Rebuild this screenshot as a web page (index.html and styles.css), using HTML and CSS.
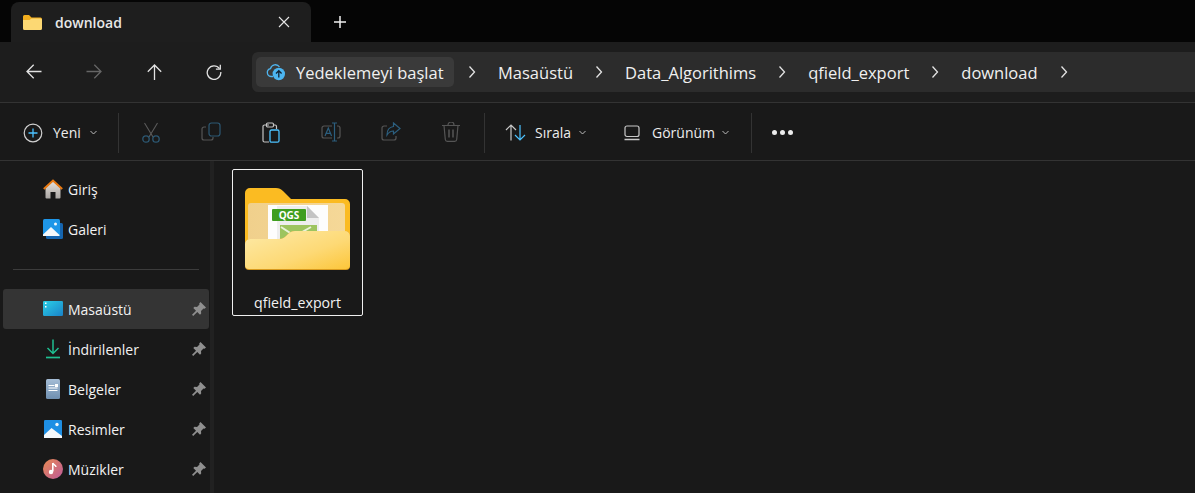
FILE: index.html
```html
<!DOCTYPE html>
<html lang="tr">
<head>
<meta charset="utf-8">
<title>download</title>
<link rel="stylesheet" href="styles.css">
</head>
<body>
<div class="window">
  <div class="tabstrip">
    <div class="tab">
      <svg class="tab-folder" width="19" height="15" viewBox="0 0 19 15"><path d="M0 1.500A1.500 1.500 0 0 1 1.500 0H6l2.500 2.500H17.500A1.500 1.500 0 0 1 19 4v2H0z" fill="#f2ae1e"/><path d="M0 5h6.500L8.500 3.500H17.500A1.500 1.500 0 0 1 19 5v8.500a1.500 1.500 0 0 1-1.500 1.500h-16A1.500 1.500 0 0 1 0 13.500z" fill="#fcd873"/></svg>
      <span class="tab-title">download</span>
      <svg class="tab-close" width="12" height="12" viewBox="0 0 12 12"><path d="M1 1l10 10M11 1L1 11" stroke="#e6e6e6" stroke-width="1.100" fill="none"/></svg>
    </div>
    <svg class="tab-add" width="12" height="12" viewBox="0 0 12 12"><path d="M6 0v12M0 6h12" stroke="#f0f0f0" stroke-width="1.500"/></svg>
  </div>

  <div class="navbar">
    <div class="nav-buttons">
      <span class="nav-btn"><svg width="16" height="15" viewBox="0 0 16 15"><path d="M15.500 7.500H1.200M7.700 .8L1 7.500l6.700 6.700" stroke="#e2e2e2" stroke-width="1.300" fill="none"/></svg></span>
      <span class="nav-btn"><svg width="16" height="15" viewBox="0 0 16 15"><path d="M.5 7.500h14.300M8.300 .8L15 7.500l-6.700 6.700" stroke="#666" stroke-width="1.300" fill="none"/></svg></span>
      <span class="nav-btn"><svg width="15" height="16" viewBox="0 0 15 16"><path d="M7.500 16V1.200M.8 7.700L7.500 1l6.700 6.700" stroke="#e2e2e2" stroke-width="1.300" fill="none"/></svg></span>
      <span class="nav-btn"><svg width="16" height="16" viewBox="0 0 16 16"><path d="M13.500 4.600A6.800 6.800 0 1 0 14.800 8" stroke="#e2e2e2" stroke-width="1.300" fill="none"/><path d="M14.300 0.800v4.400H9.900" stroke="#e2e2e2" stroke-width="1.300" fill="none"/></svg></span>
    </div>
    <div class="address">
      <div class="backup">
        <svg width="20" height="18" viewBox="0 0 20 18"><path d="M7 13.500H5a4 4 0 0 1-.5-7.900A5 5 0 0 1 13.500 4" stroke="#4fb4ee" stroke-width="1.300" fill="none"/><circle cx="12.800" cy="11" r="6.200" fill="#4cb5f0"/><path d="M12.800 14.500V8M10 10.500l2.800-2.800 2.800 2.800" stroke="#123" stroke-width="1.300" fill="none"/></svg>
        <span>Yedeklemeyi başlat</span>
      </div>
      <svg class="crumb-sep" width="8" height="14" viewBox="0 0 8 14"><path d="M1.500 1.500L6.500 7l-5 5.500" stroke="#e4e4e4" stroke-width="1.300" fill="none"/></svg>
      <span class="crumb">Masaüstü</span>
      <svg class="crumb-sep" width="8" height="14" viewBox="0 0 8 14"><path d="M1.500 1.500L6.500 7l-5 5.500" stroke="#e4e4e4" stroke-width="1.300" fill="none"/></svg>
      <span class="crumb">Data_Algorithims</span>
      <svg class="crumb-sep" width="8" height="14" viewBox="0 0 8 14"><path d="M1.500 1.500L6.500 7l-5 5.500" stroke="#e4e4e4" stroke-width="1.300" fill="none"/></svg>
      <span class="crumb">qfield_export</span>
      <svg class="crumb-sep" width="8" height="14" viewBox="0 0 8 14"><path d="M1.500 1.500L6.500 7l-5 5.500" stroke="#e4e4e4" stroke-width="1.300" fill="none"/></svg>
      <span class="crumb">download</span>
      <svg class="crumb-sep" width="8" height="14" viewBox="0 0 8 14"><path d="M1.500 1.500L6.500 7l-5 5.500" stroke="#e4e4e4" stroke-width="1.300" fill="none"/></svg>
    </div>
  </div>

  <div class="toolbar">
    <div class="tool tool-new">
      <svg width="20" height="20" viewBox="0 0 20 20"><circle cx="10" cy="10" r="8.800" stroke="#d0d0d0" stroke-width="1.200" fill="none"/><path d="M10 5.500v9M5.500 10h9" stroke="#4cc2ff" stroke-width="1.300"/></svg>
      <span>Yeni</span>
      <svg class="chev" width="7" height="5" viewBox="0 0 7 5"><path d="M.5 1l3 3 3-3" stroke="#bbb" fill="none"/></svg>
    </div>
    <i class="tool-sep"></i>
    <div class="icon-group">
      <span class="icon-btn"><svg width="20" height="21" viewBox="0 0 20 21"><path d="M3.500 1l8.500 14M16.500 1L8 15" stroke="#5a5a5a" stroke-width="1.100" fill="none"/><circle cx="5" cy="17" r="3.200" stroke="#2c5873" stroke-width="1.300" fill="none"/><circle cx="15" cy="17" r="3.200" stroke="#2c5873" stroke-width="1.300" fill="none"/></svg></span>
      <span class="icon-btn"><svg width="20" height="19" viewBox="0 0 20 19"><path d="M5 5H3a2 2 0 0 0-2 2v9a2 2 0 0 0 2 2h7a2 2 0 0 0 2-2v-1" stroke="#555" stroke-width="1.200" fill="none"/><rect x="8" y="1" width="11" height="13" rx="2.500" stroke="#2c5873" stroke-width="1.200" fill="none"/></svg></span>
      <span class="icon-btn"><svg width="18" height="21" viewBox="0 0 18 21"><path d="M7 3H2.500A1.500 1.500 0 0 0 1 4.500v14A1.500 1.500 0 0 0 2.500 20H7M14.500 7V4.500A1.500 1.500 0 0 0 13 3h-1" stroke="#c4c4c4" stroke-width="1.200" fill="none"/><rect x="4.500" y="1" width="7" height="4" rx="1.200" stroke="#c4c4c4" stroke-width="1.200" fill="none"/><rect x="8" y="8" width="9" height="12.200" rx="1.500" stroke="#4cc2ff" stroke-width="1.300" fill="none"/></svg></span>
      <span class="icon-btn"><svg width="20" height="20" viewBox="0 0 20 20"><path d="M11 4H3a2 2 0 0 0-2 2v8a2 2 0 0 0 2 2h8M16 4h1a2 2 0 0 1 2 2v8a2 2 0 0 1-2 2h-1" stroke="#555" stroke-width="1.200" fill="none"/><path d="M11 1h5M13.500 1v18M11 19h5" stroke="#2c5f7f" stroke-width="1.200" fill="none"/><path d="M4 14l3.300-8 3.300 8M5.200 11.300h4.200" stroke="#2c5f7f" stroke-width="1.200" fill="none"/></svg></span>
      <span class="icon-btn"><svg width="20" height="19" viewBox="0 0 20 19"><path d="M6 4H3a2 2 0 0 0-2 2v10a2 2 0 0 0 2 2h10a2 2 0 0 0 2-2v-2" stroke="#555" stroke-width="1.200" fill="none"/><path d="M12.500 1l6.500 5.500-6.500 5.500V9C9 9 7.500 10.500 6 13c0-5 2.500-8 6.500-8.500z" stroke="#2c5f7f" stroke-width="1.200" fill="none"/></svg></span>
      <span class="icon-btn"><svg width="18" height="20" viewBox="0 0 18 20"><path d="M0 3.500h18M6 3.500V3a3 3 0 0 1 6 0v.5M2 3.500l1.300 14a2 2 0 0 0 2 1.800h7.400a2 2 0 0 0 2-1.800L16 3.500" stroke="#555" stroke-width="1.200" fill="none"/><path d="M7 7.500v8M11 7.500v8" stroke="#555" stroke-width="1.500"/></svg></span>
    </div>
    <i class="tool-sep"></i>
    <div class="tool tool-sort">
      <svg width="21" height="17" viewBox="0 0 21 17"><path d="M6 16.500V1M1 6l5-5 5 5" stroke="#c8c8c8" stroke-width="1.200" fill="none"/><path d="M15 1v15M10 11l5 5 5-5" stroke="#4cc2ff" stroke-width="1.200" fill="none"/></svg>
      <span>Sırala</span>
      <svg class="chev" width="7" height="5" viewBox="0 0 7 5"><path d="M.5 1l3 3 3-3" stroke="#bbb" fill="none"/></svg>
    </div>
    <div class="tool tool-view">
      <svg width="16" height="16" viewBox="0 0 16 16"><rect x="1" y="1" width="14" height="10.500" rx="2" stroke="#c8c8c8" stroke-width="1.200" fill="none"/><path d="M0.500 14.500h15" stroke="#c8c8c8" stroke-width="1.500"/></svg>
      <span>Görünüm</span>
      <svg class="chev" width="7" height="5" viewBox="0 0 7 5"><path d="M.5 1l3 3 3-3" stroke="#bbb" fill="none"/></svg>
    </div>
    <i class="tool-sep tool-sep-last"></i>
    <div class="more"><i></i><i></i><i></i></div>
  </div>

  <div class="main">
    <nav class="sidebar">
      <div class="side-item">
        <svg width="20" height="20" viewBox="0 0 20 20"><defs><linearGradient id="house" x1="0" y1="0" x2="0" y2="1"><stop offset="0" stop-color="#e6e0da"/><stop offset="1" stop-color="#a9a6a3"/></linearGradient></defs><path d="M2.500 9L10 2.500 17.500 9v9.500a1 1 0 0 1-1 1H12.500V13h-5v6.500H3.500a1 1 0 0 1-1-1z" fill="url(#house)"/><path d="M.8 10L10 1.500 19.200 10" stroke="#ea7a12" stroke-width="2" fill="none"/></svg>
        <span>Giriş</span>
      </div>
      <div class="side-item">
        <svg width="20" height="20" viewBox="0 0 20 20"><rect x="3" y="4" width="17" height="16" rx="1.500" fill="#1565b0"/><rect width="17" height="17" rx="1.500" fill="#1e96e8"/><path d="M0 15.500L8 8l8.500 8v1H0z" fill="#f4f8fb"/><circle cx="12.500" cy="5" r="1.500" fill="#f4f8fb"/></svg>
        <span>Galeri</span>
      </div>
      <hr class="side-rule">
      <div class="side-item side-item-active">
        <svg width="20" height="16" viewBox="0 0 20 16"><defs><linearGradient id="desk" x1="0" y1="0" x2="1" y2="1"><stop offset="0" stop-color="#2ad0e6"/><stop offset="1" stop-color="#1a82c8"/></linearGradient></defs><rect width="20" height="15" rx="1.200" fill="url(#desk)"/><rect x="2" y="1.500" width="1.500" height="1.500" fill="#fff"/><rect x="2" y="5" width="1.500" height="1.500" fill="#fff"/></svg>
        <span>Masaüstü</span>
        <svg class="pin" width="14" height="14" viewBox="0 0 14 14"><path d="M8.500 0L14 5.500l-1.500 1.300-1-.3L9 9l.2 2.500-1.200 1.200-2.700-2.700L1.200 14 0 12.800l4-4.100L1.300 6l1.200-1.200L5 5l2.500-2.500-.3-1z" fill="#8f8f8f"/></svg>
      </div>
      <div class="side-item">
        <svg width="20" height="20" viewBox="0 0 20 20"><path d="M10 .5v14M4.500 9l5.500 5.500L15.500 9" stroke="#1fbf91" stroke-width="1.500" fill="none"/><path d="M3 18.500h14" stroke="#1fbf91" stroke-width="1.700"/></svg>
        <span>İndirilenler</span>
        <svg class="pin" width="14" height="14" viewBox="0 0 14 14"><path d="M8.500 0L14 5.500l-1.500 1.300-1-.3L9 9l.2 2.500-1.200 1.200-2.700-2.700L1.200 14 0 12.800l4-4.100L1.300 6l1.200-1.200L5 5l2.500-2.500-.3-1z" fill="#8f8f8f"/></svg>
      </div>
      <div class="side-item">
        <svg width="20" height="20" viewBox="0 0 20 20"><defs><linearGradient id="doc" x1="0" y1="0" x2="0" y2="1"><stop offset="0" stop-color="#a5bdd6"/><stop offset="1" stop-color="#6f8fb0"/></linearGradient></defs><rect x="3" y="0" width="14" height="20" rx="1.500" fill="url(#doc)"/><path d="M5.500 6.500h6M5.500 9h9M5.500 11.500h9" stroke="#fff" stroke-width="1.200"/><rect x="12" y="5" width="3" height="3" fill="#fff"/></svg>
        <span>Belgeler</span>
        <svg class="pin" width="14" height="14" viewBox="0 0 14 14"><path d="M8.500 0L14 5.500l-1.500 1.300-1-.3L9 9l.2 2.500-1.200 1.200-2.700-2.700L1.200 14 0 12.800l4-4.100L1.300 6l1.200-1.200L5 5l2.500-2.500-.3-1z" fill="#8f8f8f"/></svg>
      </div>
      <div class="side-item">
        <svg width="20" height="20" viewBox="0 0 20 20"><rect x="1" y="1" width="18" height="18" rx="1.200" fill="#1e8fe4"/><path d="M1 19v-3l7.500-7 10.500 8v2z" fill="#f4f8fb"/><circle cx="14" cy="5.500" r="1.700" fill="#f4f8fb"/></svg>
        <span>Resimler</span>
        <svg class="pin" width="14" height="14" viewBox="0 0 14 14"><path d="M8.500 0L14 5.500l-1.500 1.300-1-.3L9 9l.2 2.500-1.200 1.200-2.700-2.700L1.200 14 0 12.800l4-4.100L1.300 6l1.200-1.200L5 5l2.500-2.500-.3-1z" fill="#8f8f8f"/></svg>
      </div>
      <div class="side-item">
        <svg width="20" height="20" viewBox="0 0 20 20"><defs><linearGradient id="music" x1="0" y1="0" x2="1" y2="1"><stop offset="0" stop-color="#e98a52"/><stop offset="1" stop-color="#bd5a9a"/></linearGradient></defs><circle cx="10" cy="10" r="10" fill="url(#music)"/><path d="M9.800 4v8.500" stroke="#fff" stroke-width="1.600"/><path d="M9.800 4c.5 2 3 2 3.200 4" stroke="#fff" stroke-width="1.500" fill="none"/><circle cx="8" cy="13" r="2.200" fill="#fff"/></svg>
        <span>Müzikler</span>
        <svg class="pin" width="14" height="14" viewBox="0 0 14 14"><path d="M8.500 0L14 5.500l-1.500 1.300-1-.3L9 9l.2 2.500-1.200 1.200-2.700-2.700L1.200 14 0 12.800l4-4.100L1.300 6l1.200-1.200L5 5l2.500-2.500-.3-1z" fill="#8f8f8f"/></svg>
      </div>
    </nav>
    <div class="divider"></div>
    <section class="files">
      <div class="file selected">
        <svg class="big-folder" width="105" height="84" viewBox="0 0 105 84">
          <defs>
            <linearGradient id="front" x1="0" y1="0" x2="1" y2="1"><stop offset="0" stop-color="#fdeaa8"/><stop offset=".6" stop-color="#fdd975"/><stop offset="1" stop-color="#fcc63a"/></linearGradient>
            <linearGradient id="panel" x1="0" y1="0" x2="1" y2="0"><stop offset="0" stop-color="#f0d08c"/><stop offset="1" stop-color="#f5d898"/></linearGradient>
          </defs>
          <path d="M0 6a5 5 0 0 1 5-5h26c3 0 5 1 7 3l8 8h54a5 5 0 0 1 5 5v60H0z" fill="#fbbb22"/>
          <rect x="3" y="16" width="97" height="50" rx="3" fill="url(#panel)"/>
          <rect x="23" y="18" width="60" height="40" fill="#fdfdfd"/>
          <path d="M32 19h30l12 12v30H32z" fill="#eeeeee"/>
          <path d="M62 19v12h12z" fill="#c4c4c4"/>
          <path d="M35 38h37v22H35z" fill="#9dc45f"/>
          <path d="M36 40l14 9 16-9" stroke="#eaf3d8" stroke-width="2" fill="none"/>
          <rect x="27" y="22" width="34" height="12" rx="1" fill="#3f9e1f"/>
          <text class="qgs" x="44" y="32" text-anchor="middle">QGS</text>
          <path d="M5 52h29c3 0 5-1 7-3l2-2c2-2 4-3 7-3h50a5 5 0 0 1 5 5v30a4 4 0 0 1-4 4H4a4 4 0 0 1-4-4V57a5 5 0 0 1 5-5z" fill="#d89a1e"/>
          <path d="M5 52h29c3 0 5-1 7-3l2-2c2-2 4-3 7-3h50a5 5 0 0 1 5 5v29a4 4 0 0 1-4 4H4a4 4 0 0 1-4-4V57a5 5 0 0 1 5-5z" fill="url(#front)"/>
        </svg>
        <span class="file-name">qfield_export</span>
      </div>
    </section>
  </div>
</div>
</body>
</html>
```

FILE: styles.css
```css
* { box-sizing: border-box; }
html, body { margin: 0; height: 100%; overflow: hidden; background: #191919; }
body { font-family: "Open Sans", "Noto Sans", "Liberation Sans", sans-serif; color: #f2f2f2; }
svg { display: block; flex: none; }

.window { display: flex; flex-direction: column; height: 493px; width: 1195px; }

.tabstrip { height: 42px; background: #050505; display: flex; align-items: center; padding: 2px 0 0 11px; flex: none; }
.tab { width: 300px; height: 40px; background: #1e1e1e; border-radius: 8px 8px 0 0; display: flex; align-items: center; padding-left: 12px; }
.tab-title { margin-left: 13px; font-size: 14px; font-weight: 600; color: #e8e8e8; width: 223px; }
.tab-add { margin-left: 23px; }

.navbar { height: 61px; background: #1d1d1d; border-bottom: 1px solid #333; display: flex; align-items: center; flex: none; }
.nav-buttons { display: flex; width: 252px; padding-left: 4px; }
.nav-btn { width: 60px; display: flex; justify-content: center; }
.address { flex: 1; height: 40px; background: #2c2c2c; border-radius: 6px 0 0 6px; display: flex; align-items: center; padding-left: 4px; font-size: 16.500px; color: #f0f0f0; white-space: nowrap; }
.backup { width: 198px; height: 30px; background: #3a3a3a; border-radius: 5px; display: flex; align-items: center; padding-left: 10px; gap: 10px; }
.crumb-sep { margin: 0 22px; }
.backup + .crumb-sep { margin-left: 14px; }

.toolbar { height: 58px; background: #191919; border-bottom: 1px solid #333; display: flex; align-items: center; flex: none; font-size: 14px; color: #ececec; padding-top: 2px; }
.tool { display: flex; align-items: center; }
.tool-new { width: 118px; padding-left: 23px; }
.tool-new span { margin-left: 10px; width: 37px; }
.tool-sep { width: 1px; height: 40px; background: #333; flex: none; }
.icon-group { display: flex; padding-left: 2px; width: 365px; }
.icon-btn { width: 60px; display: flex; justify-content: center; }
.tool-sort { padding-left: 20px; width: 139px; }
.tool-sort span { margin-left: 9px; width: 44px; }
.tool-view { width: 127px; }
.tool-view span { margin-left: 12px; width: 70px; }
.more { display: flex; gap: 3px; margin-left: 20px; }
.more i { width: 5px; height: 5px; border-radius: 50%; background: #ececec; }

.main { flex: 1; display: flex; min-height: 0; }
.sidebar { width: 209px; padding: 8px 0 0 3px; font-size: 14px; color: #f2f2f2; flex: none; }
.side-item { height: 40px; display: flex; align-items: center; padding-left: 40px; gap: 5px; border-radius: 3px; }
.side-item span { flex: 1; }
.side-item-active { background: #343434; }
.pin { margin-right: 3px; }
.side-rule { border: 0; height: 1px; background: #3c3c3c; margin: 20px 10px 19px 10px; }
.divider { width: 4px; margin-left: 1px; background: #212121; flex: none; }
.files { flex: 1; padding: 8px 0 0 18px; }
.file { width: 131px; height: 147px; border: 1px solid #f0f0f0; border-radius: 2px; display: flex; flex-direction: column; align-items: center; padding-top: 17px; }
.file-name { font-size: 14.200px; margin-top: 22px; color: #f2f2f2; }
.qgs { font-family: "Open Sans", sans-serif; font-size: 10px; font-weight: 700; fill: #fff; }
```
